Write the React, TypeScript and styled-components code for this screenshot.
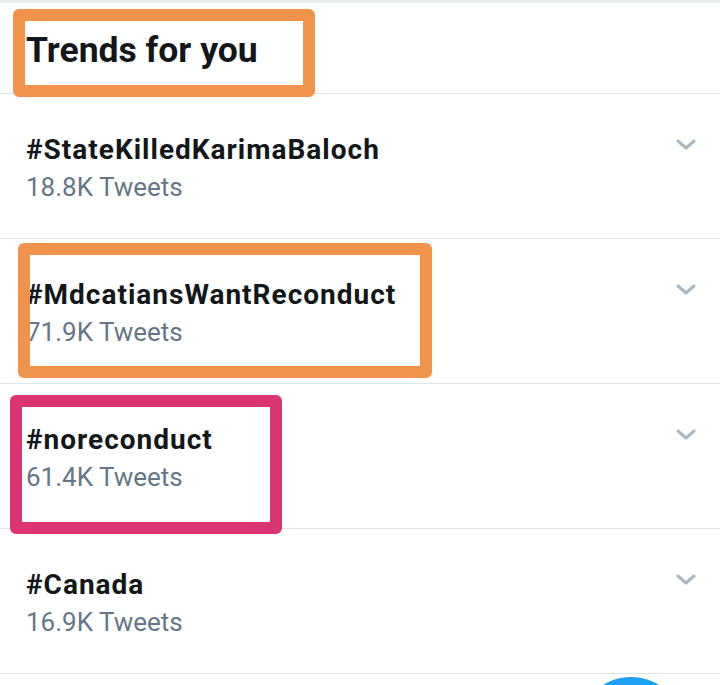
import React from "react";
import styled, { createGlobalStyle } from "styled-components";

const Global = createGlobalStyle`
  html, body { margin: 0; padding: 0; background: #ffffff; }
  body { font-family: Roboto, "Noto Sans", Arial, sans-serif; }
`;

const Page = styled.div`
  position: relative;
  width: 720px;
  height: 685px;
  overflow: hidden;
  background: #ffffff;
`;

const TopBand = styled.div`
  height: 3px;
  background: #e6ecf0;
`;

const Header = styled.div`
  height: 91px;
  box-sizing: border-box;
  padding: 30px 0 0 26px;
  border-bottom: 1px solid #dfe4e8;
`;

const Title = styled.h2`
  margin: 0;
  font-size: 35.5px;
  line-height: 1;
  font-weight: 700;
  color: #14171a;
`;

const Row = styled.div`
  display: flex;
  height: 145px;
  box-sizing: border-box;
  border-bottom: 1px solid #dfe4e8;
  padding: 0 24px 0 26px;
`;

const Info = styled.div`
  flex: 1;
  display: flex;
  flex-direction: column;
  padding-top: 42px;
`;

const Tag = styled.div`
  font-size: 28px;
  line-height: 1;
  font-weight: 700;
  letter-spacing: 1px;
  color: #14171a;
`;

const Count = styled.div`
  margin-top: 10px;
  font-size: 26px;
  line-height: 1;
  color: #657786;
`;

const Chevron = styled.svg`
  margin-top: 45px;
  width: 20px;
  height: 11px;
  flex: none;
`;

const Mark = styled.div<{ $color: string }>`
  position: absolute;
  box-sizing: border-box;
  border: 12px solid ${(p) => p.$color};
  border-radius: 6px;
`;

const Fab = styled.div`
  position: absolute;
  left: 578px;
  top: 677px;
  width: 106px;
  height: 106px;
  border-radius: 50%;
  background: #1da1f2;
`;

const trends = [
  { tag: "#StateKilledKarimaBaloch", count: "18.8K Tweets" },
  { tag: "#MdcatiansWantReconduct", count: "71.9K Tweets" },
  { tag: "#noreconduct", count: "61.4K Tweets" },
  { tag: "#Canada", count: "16.9K Tweets" },
];

const marks = [
  { x: 13, y: 9, w: 302, h: 88, c: "#f2934b" },
  { x: 18, y: 243, w: 414, h: 135, c: "#f2934b" },
  { x: 10, y: 395, w: 272, h: 139, c: "#da3572" },
];

export default function App() {
  return (
    <Page>
      <Global />
      <TopBand />
      <Header>
        <Title>Trends for you</Title>
      </Header>
      {trends.map((t) => (
        <Row key={t.tag}>
          <Info>
            <Tag>{t.tag}</Tag>
            <Count>{t.count}</Count>
          </Info>
          <Chevron viewBox="0 0 20 11">
            <polyline
              points="2,2 10,9 18,2"
              fill="none"
              stroke="#aab8c2"
              strokeWidth="3"
              strokeLinecap="round"
              strokeLinejoin="round"
            />
          </Chevron>
        </Row>
      ))}
      {marks.map((m, i) => (
        <Mark
          key={i}
          $color={m.c}
          style={{ left: m.x, top: m.y, width: m.w, height: m.h }}
        />
      ))}
      <Fab />
    </Page>
  );
}
